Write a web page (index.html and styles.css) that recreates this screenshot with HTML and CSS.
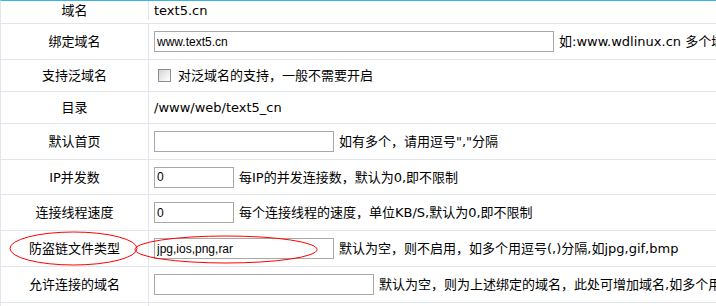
FILE: index.html
```html
<!DOCTYPE html>
<html lang="zh-CN">
<head>
    <meta charset="UTF-8">
    <title>站点设置</title>
    <link rel="stylesheet" href="styles.css">
</head>
<body>
    <div class="panel">
        <div class="row r-first">
            <div class="label">域名</div>
            <div class="value">text5.cn</div>
        </div>
        <div class="row">
            <div class="label">绑定域名</div>
            <div class="value">
                <input class="field w400" type="text" value="www.text5.cn">
                <span class="note">如:www.wdlinux.cn 多个域名用空格隔开</span>
            </div>
        </div>
        <div class="row r-short">
            <div class="label">支持泛域名</div>
            <div class="value">
                <input class="check" type="checkbox">
                <span class="check-text">对泛域名的支持，一般不需要开启</span>
            </div>
        </div>
        <div class="row r-short">
            <div class="label">目录</div>
            <div class="value">/www/web/text5_cn</div>
        </div>
        <div class="row">
            <div class="label">默认首页</div>
            <div class="value">
                <input class="field w180" type="text" value="">
                <span class="note">如有多个，请用逗号","分隔</span>
            </div>
        </div>
        <div class="row r-35">
            <div class="label">IP并发数</div>
            <div class="value">
                <input class="field w80" type="text" value="0">
                <span class="note">每IP的并发连接数，默认为0,即不限制</span>
            </div>
        </div>
        <div class="row">
            <div class="label">连接线程速度</div>
            <div class="value">
                <input class="field w80" type="text" value="0">
                <span class="note">每个连接线程的速度，单位KB/S,默认为0,即不限制</span>
            </div>
        </div>
        <div class="row">
            <div class="label">防盗链文件类型</div>
            <div class="value">
                <input class="field w180" type="text" value="jpg,ios,png,rar">
                <span class="note">默认为空，则不启用，如多个用逗号(,)分隔,如jpg,gif,bmp</span>
            </div>
        </div>
        <div class="row">
            <div class="label">允许连接的域名</div>
            <div class="value">
                <input class="field w220" type="text" value="">
                <span class="note">默认为空，则为上述绑定的域名，此处可增加域名,如多个用空格分隔</span>
            </div>
        </div>
        <div class="row">
            <div class="label">&nbsp;</div>
            <div class="value"></div>
        </div>

        <!-- red marks drawn over the screenshot -->
        <svg class="marks" width="716" height="306" viewBox="0 0 716 306">
            <ellipse cx="73.5" cy="248.5" rx="63.5" ry="16.5" fill="none" stroke="#ff0000" stroke-width="1"/>
            <ellipse cx="226" cy="249.5" rx="91" ry="13.5" fill="none" stroke="#ff0000" stroke-width="1"/>
        </svg>
    </div>
</body>
</html>
```

FILE: styles.css
```css
body {
    margin: 0;
    background: #fff;
    color: #000;
    font-family: "DejaVu Sans", "Noto Sans CJK SC", sans-serif;
    font-size: 13px;
    line-height: 17px;
    overflow: hidden;
}

.panel {
    position: relative;
    width: 1100px;
    border-top: 1px solid #3db3e8;
    border-left: 1px solid #e1e5ec;
}

.row {
    display: flex;
    height: 36px;
    box-sizing: border-box;
    border-bottom: 1px solid #e1e5ec;
}

.r-first {
    height: 23px;
    padding-bottom: 3px;
}

.r-short {
    height: 32px;
}

.r-35 {
    height: 35px;
}

.label {
    flex: none;
    width: 148px;
    box-sizing: border-box;
    border-right: 1px solid #e1e5ec;
    display: flex;
    align-items: center;
    justify-content: center;
}

.value {
    flex: 1;
    display: flex;
    align-items: center;
    padding-left: 5px;
    white-space: nowrap;
}

.field {
    height: 21px;
    box-sizing: border-box;
    margin: 0;
    padding: 0 2px;
    border: 1px solid #a9a9a9;
    background: #fff;
    color: #000;
    font-family: "Liberation Sans", sans-serif;
    font-size: 12px;
    outline: none;
}

.w80 { width: 80px; }
.w180 { width: 180px; }
.w220 { width: 220px; }
.w400 { width: 400px; }

.note {
    margin-left: 5px;
}

.check {
    appearance: none;
    -webkit-appearance: none;
    width: 13px;
    height: 13px;
    margin: 0 0 0 4px;
    box-sizing: border-box;
    border: 1px solid #8d8d8d;
    background: linear-gradient(135deg, #d4d4d4, #f4f4f4 70%, #fff);
}

.check-text {
    margin-left: 7px;
}

.marks {
    position: absolute;
    top: -1px;
    left: -1px;
    pointer-events: none;
}
```
